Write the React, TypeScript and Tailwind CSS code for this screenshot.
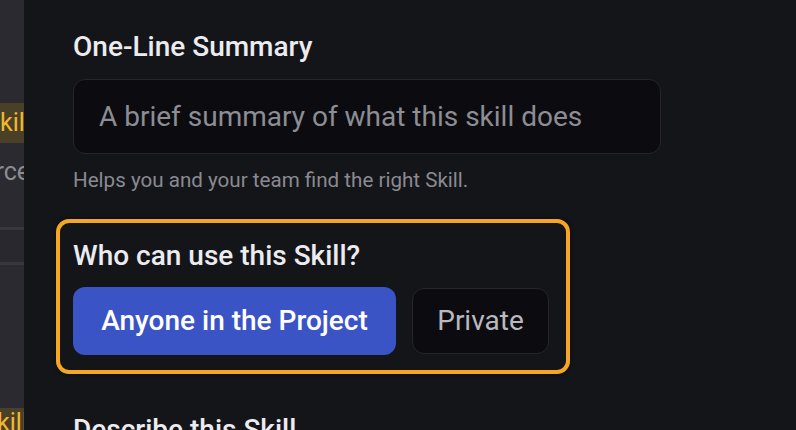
import React from "react";

export default function App() {
  return (
    <div
      className="flex h-[430px] w-[796px] overflow-hidden bg-[#141519]"
      style={{ fontFamily: "Roboto, 'Noto Sans', sans-serif" }}
    >
      {/* collapsed sidebar edge: labels run on under the main panel */}
      <aside className="flex w-[24px] shrink-0 flex-col overflow-hidden bg-[#2b2a30]">
        <div className="h-[103px] shrink-0" />
        <div className="flex h-[40px] shrink-0 items-center justify-end whitespace-nowrap bg-[#4a3f27] text-[25px] text-[#f2b92f]">
          <span className="-mr-[7px]">Skill</span>
        </div>
        <div className="mt-[9px] flex h-[40px] shrink-0 items-center justify-end whitespace-nowrap text-[25px] text-[#8d8c93]">
          <span className="-mr-[6px]">Resource</span>
        </div>
        <div className="h-[35px] shrink-0" />
        <div className="h-[38px] shrink-0 border-y-[3px] border-[#38373d] bg-[#29282e]" />
        <div className="flex-1" />
        <div className="flex h-[22px] shrink-0 items-start justify-end whitespace-nowrap bg-[#4a3f27] text-[25px] leading-[30px] text-[#f2b92f]">
          <span className="-mr-[4px]">Skill</span>
        </div>
      </aside>

      <main className="flex-1 pl-[32px] pt-[29px]">
        <section className="pl-[17px]">
          <h2 className="text-[28px] font-medium leading-[36px] text-[#ececf0]">One-Line Summary</h2>
          <div className="mt-[14px] flex h-[75px] w-[588px] items-center rounded-[12px] border border-[#25252b] bg-[#0c0c10] px-[25px]">
            <span className="text-[28px] text-[#8d8d94]">A brief summary of what this skill does</span>
          </div>
          <p className="mt-[12px] text-[20.6px] leading-[28px] text-[#8a8a91]">
            Helps you and your team find the right Skill.
          </p>
        </section>

        <section className="mt-[25px] w-[514px] rounded-[13px] border-4 border-[#f5a623] px-[13px] pb-[15px] pt-[16px] shadow-[0_0_4px_rgba(0,0,0,0.6)]">
          <h2 className="text-[28px] font-medium leading-[34px] text-[#ececf0]">Who can use this Skill?</h2>
          <div className="mt-[14px] flex items-center gap-[16px]">
            <button className="h-[68px] w-[323px] rounded-[12px] bg-[#3a54c6] text-[28px] font-medium text-white">
              Anyone in the Project
            </button>
            <button className="h-[66px] w-[137px] rounded-[12px] border border-[#25252b] bg-[#0c0c10] text-[28px] text-[#b9b9bf]">
              Private
            </button>
          </div>
        </section>

        <h2 className="mt-[39px] pl-[17px] text-[28px] font-medium leading-[34px] text-[#ececf0]">
          Describe this Skill
        </h2>
      </main>
    </div>
  );
}
